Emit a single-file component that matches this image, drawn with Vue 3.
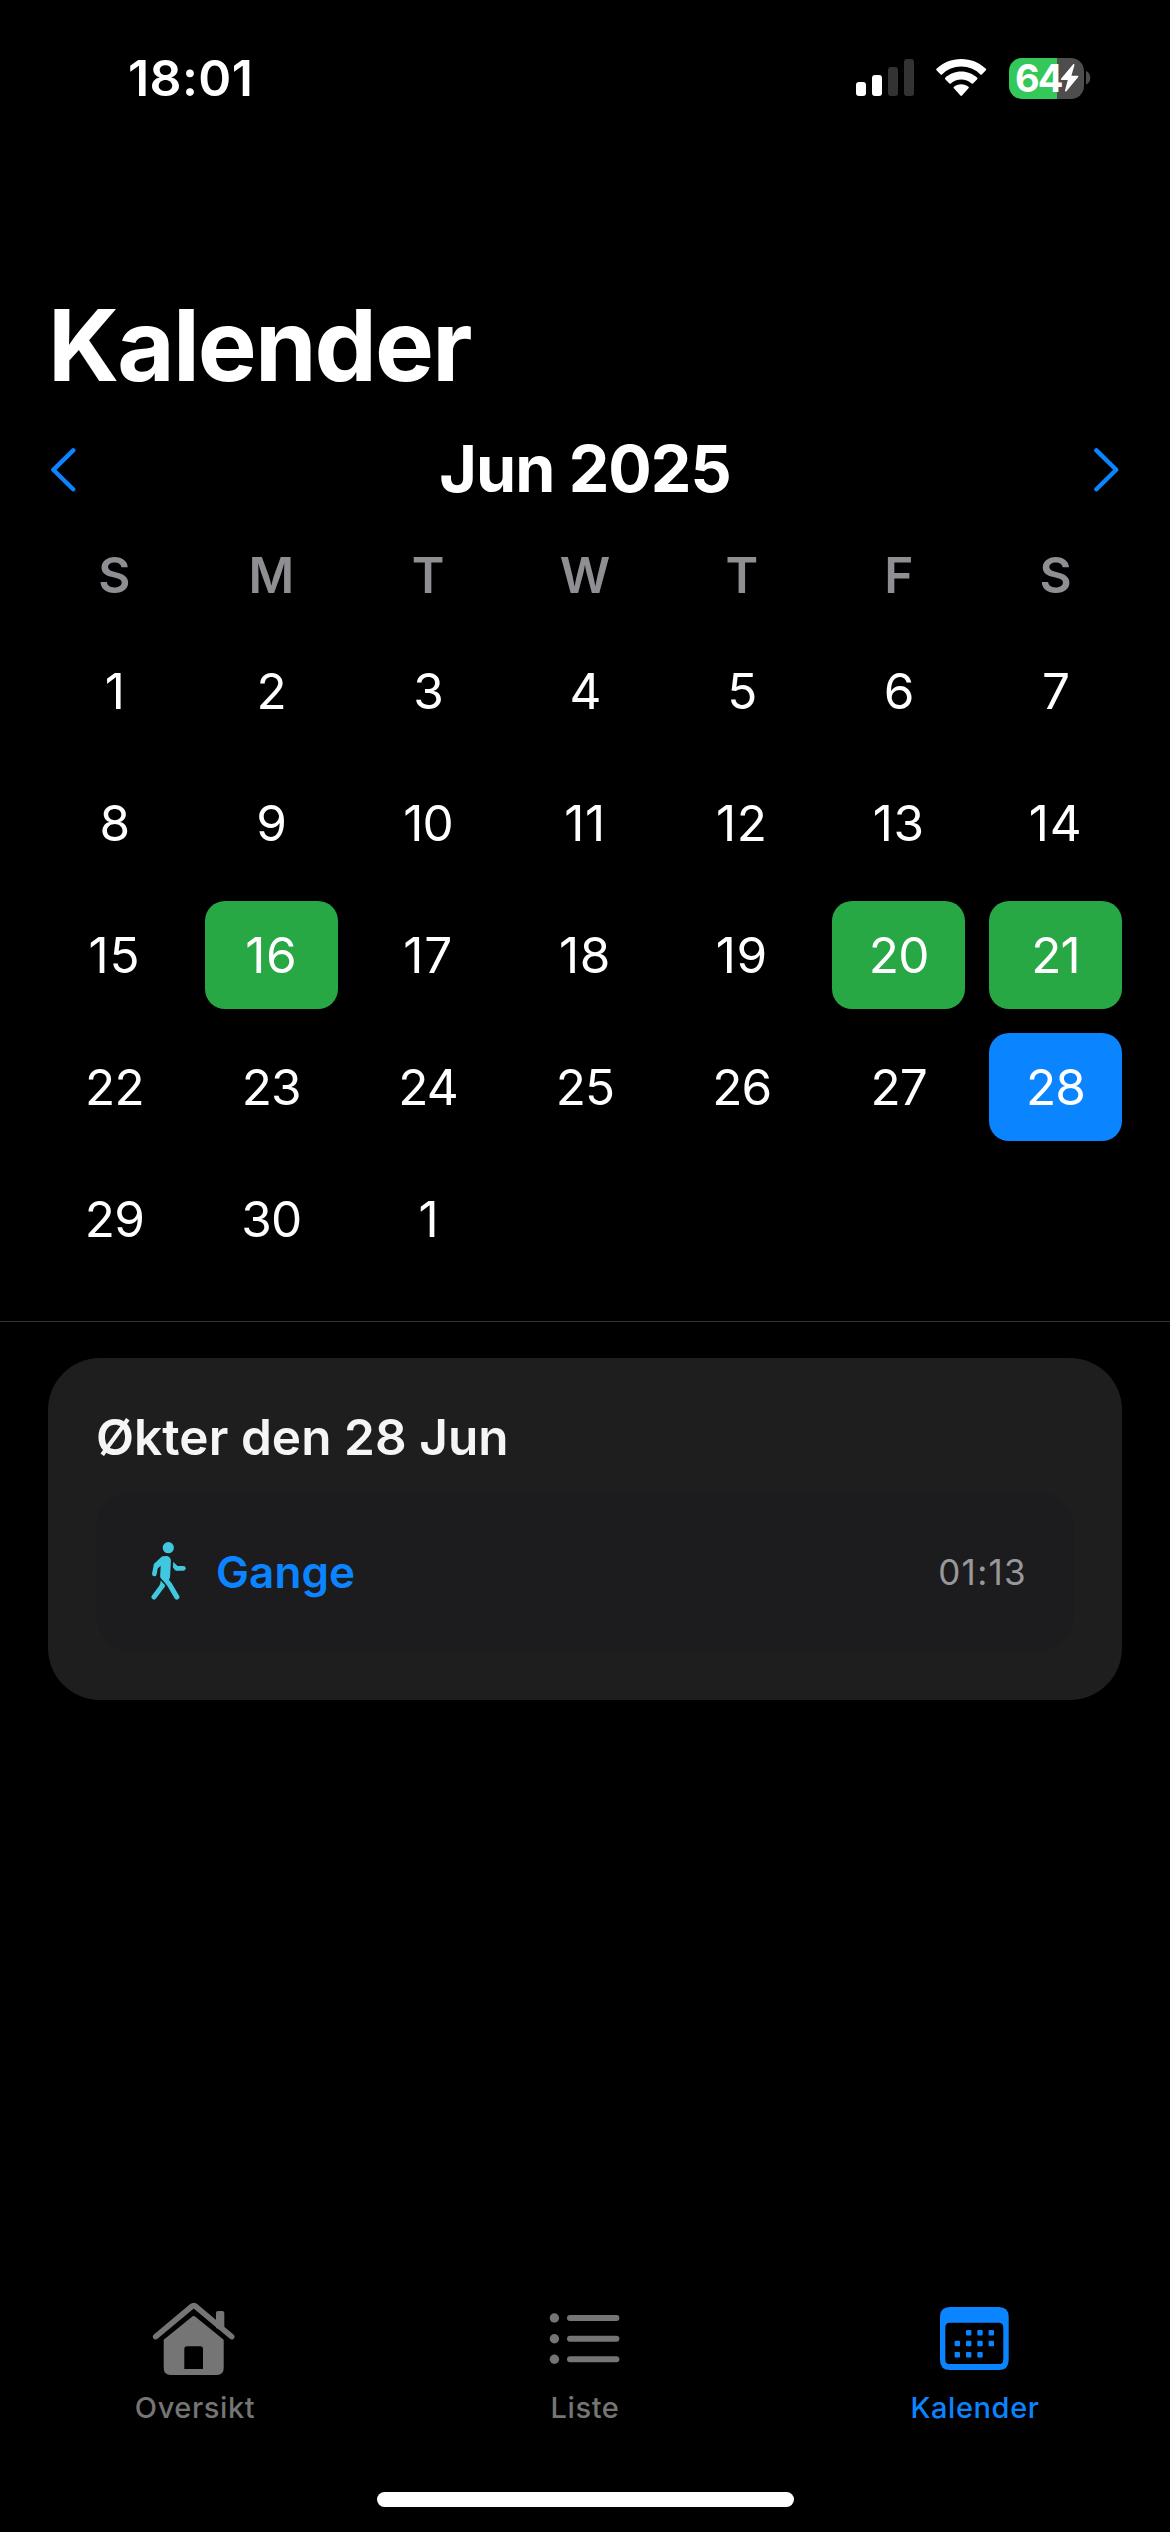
<script setup>
const weekdays = ['S', 'M', 'T', 'W', 'T', 'F', 'S']
const workoutDays = [16, 20, 21]
const selectedDay = 28

const days = Array.from({ length: 30 }, (_, i) => ({
  key: `jun-${i + 1}`,
  label: i + 1,
  teen: i + 1 >= 11 && i + 1 <= 19,
  workout: workoutDays.includes(i + 1),
  selected: i + 1 === selectedDay,
}))
days.push({ key: 'jul-1', label: 1, teen: false, workout: false, selected: false })

const calendarDots = [
  [43.7, 42.7], [55, 42.7], [66.3, 42.7],
  [32.3, 53.5], [43.7, 53.5], [55, 53.5], [66.3, 53.5],
  [32.3, 64.7], [43.7, 64.7], [55, 64.7],
]
</script>

<template>
  <div class="screen">
    <header class="status">
      <span class="clock">18:01</span>
      <div class="indicators">
        <svg class="signal" width="58" height="38" viewBox="0 0 58 38">
          <rect x="0" y="23" width="10" height="14" rx="3" fill="#fff" />
          <rect x="16" y="16" width="10" height="21" rx="3" fill="#fff" />
          <rect x="32" y="8" width="10" height="29" rx="3" fill="#333" />
          <rect x="48" y="0" width="10" height="37" rx="3" fill="#333" />
        </svg>
        <svg class="wifi" width="51" height="38" viewBox="0 0 51 38">
          <g fill="#fff">
            <path d="M25.2 0C15.500 0 6.800 3.700 .5 9.800a1 1 0 0 0 0 1.400L4.600 15.400a1 1 0 0 0 1.400 0A27.500 27.500 0 0 1 25.200 7.600 27.500 27.500 0 0 1 44.400 15.400a1 1 0 0 0 1.400 0L49.900 11.200a1 1 0 0 0 0-1.400C43.600 3.700 34.900 0 25.200 0z" />
            <path d="M25.200 12.600c-6.200 0-11.800 2.400-16 6.200a1 1 0 0 0 0 1.400l4.200 4.200a1 1 0 0 0 1.400 0 15.500 15.500 0 0 1 20.800 0 1 1 0 0 0 1.400 0l4.200-4.200a1 1 0 0 0 0-1.400c-4.200-3.800-9.800-6.200-16-6.200z" />
            <path d="M25.200 25.200c-2.800 0-5.300 1-7.300 2.600a1 1 0 0 0 0 1.500l6.500 7.200a1.100 1.100 0 0 0 1.600 0l6.500-7.200a1 1 0 0 0 0-1.500c-2-1.600-4.500-2.600-7.300-2.600z" />
          </g>
        </svg>
        <div class="battery">
          <span class="level">64</span>
          <svg class="bolt" width="19" height="28" viewBox="0 0 19 28">
            <path d="M13 .5 1 14.700c-.5.700-.2 1.300.6 1.300h6.200L5 26.500c-.3 1 .7 1.500 1.400.7L18.200 13c.5-.7.2-1.300-.6-1.300h-6.200L14.400 1.200C14.700.2 13.700-.3 13 .5z" fill="#fff" />
          </svg>
        </div>
        <svg class="nub" width="5" height="14" viewBox="0 0 5 14">
          <path d="M0 0c2.600.900 4.300 3.700 4.300 6.800S2.600 12.700 0 13.600z" fill="#4d4d4d" />
        </svg>
      </div>
    </header>

    <h1 class="title">Kalender</h1>

    <div class="month">
      <svg width="28" height="46" viewBox="0 0 28 46">
        <path d="M24.200 4.400 4.300 23.800 24.200 43.300" fill="none" stroke="#0a84ff" stroke-width="4.400" stroke-linecap="round" stroke-linejoin="round" />
      </svg>
      <h2 class="month-name">Jun 2025</h2>
      <svg width="28" height="46" viewBox="0 0 28 46">
        <path d="M3.400 4.400 23.200 23.800 3.400 43.300" fill="none" stroke="#0a84ff" stroke-width="4.400" stroke-linecap="round" stroke-linejoin="round" />
      </svg>
    </div>

    <div class="weekdays">
      <span v-for="(day, i) in weekdays" :key="i">{{ day }}</span>
    </div>

    <div class="grid">
      <div
        v-for="day in days"
        :key="day.key"
        class="day"
        :class="{ teen: day.teen, workout: day.workout, selected: day.selected }"
      >{{ day.label }}</div>
    </div>

    <div class="divider"></div>

    <section class="card">
      <h3 class="card-title">Økter den 28 Jun</h3>
      <div class="session">
        <svg class="walker" width="36" height="60" viewBox="0 0 36 60">
          <g fill="none" stroke="#40c8e0" stroke-linecap="round" stroke-linejoin="round">
            <path d="M12 16.800 5 23.300 3.300 32" stroke-width="4.600" />
            <path d="M12.500 35 18.500 42.500 25.800 55" stroke-width="5.200" />
            <path d="M11.200 44 3 55" stroke-width="5" />
            <path d="M25.500 26.300H32.300" stroke-width="4.800" />
          </g>
          <g fill="#40c8e0">
            <circle cx="17.300" cy="5.700" r="5.600" />
            <path d="M14.500 13.900c3.500 0 5.600 2 5.400 5.300l-.8 14.800c0 1.200-.3 2-.8 3L15 41.300l-4.700-4.500C9.400 35.800 9.100 34.700 9.200 33l.5-9.300-3.500 3.100-3-4.500 6.300-6.200c1.500-1.500 3.200-2.200 5-2.200z" />
            <path d="M9.700 38.500 13.900 43.300c-.2 1.200-.5 2-1.200 3L8.600 43.200c.6-1 .9-2.700 1.100-4.700z" />
            <path d="M22.200 19.800 26.500 23.900 25.500 28.700 22 25.800z" />
          </g>
        </svg>
        <span class="session-name">Gange</span>
        <span class="duration">01:13</span>
      </div>
    </section>

    <nav class="tabs">
      <div class="tab">
        <svg width="100" height="90" viewBox="0 0 100 90">
          <path d="M10.700 46.600 46.700 16.500q2-1.600 4 0L86.700 46.600" fill="none" stroke="#757575" stroke-width="5.600" stroke-linecap="round" stroke-linejoin="round" />
          <path d="M71 38V23q0-2 2-2h4.300q2 0 2 2v18z" fill="#757575" />
          <path fill-rule="evenodd" d="M47 26.700q1.700-1.400 3.400 0L78.700 49.800V78q0 7-7 7h-46q-7 0-7-7V49.800zM42 56.300q-2.700 0-2.700 2.700V79H58V59q0-2.700-2.700-2.700z" fill="#757575" />
        </svg>
        <span class="tab-label">Oversikt</span>
      </div>
      <div class="tab">
        <svg width="100" height="90" viewBox="0 0 100 90" fill="#757575">
          <template v-for="y in [28, 48.7, 69.3]" :key="y">
            <circle cx="19.400" :cy="y" r="4.700" />
            <rect x="32" :y="y - 3" width="52.400" height="6" rx="3" />
          </template>
        </svg>
        <span class="tab-label">Liste</span>
      </div>
      <div class="tab active">
        <svg width="100" height="90" viewBox="0 0 100 90" fill="#0a84ff">
          <path fill-rule="evenodd" d="M25 17h48.700q10 0 10 10v43q0 10-10 10H25q-10 0-10-10V27q0-10 10-10zM25 32.700q-4.700 0-4.700 4.700v32q0 4.700 4.700 4.700h48.600q4.700 0 4.700-4.700v-32q0-4.700-4.700-4.700z" />
          <rect v-for="([x, y], i) in calendarDots" :key="i" :x="x - 2.7" :y="y - 2.7" width="5.400" height="5.400" rx="1" />
        </svg>
        <span class="tab-label">Kalender</span>
      </div>
    </nav>
    <div class="home-indicator"></div>
  </div>
</template>

<style>
body {
  background: #000;
}
</style>

<style scoped>
.screen {
  display: flex;
  flex-direction: column;
  width: 1170px;
  height: 2532px;
  overflow: hidden;
  background: #000;
  color: #fff;
  font-family: Inter, "Liberation Sans", sans-serif;
}

h1,
h2,
h3 {
  margin: 0;
}

.status {
  display: flex;
  justify-content: space-between;
  align-items: center;
  height: 156px;
  padding: 0 79px 0 128px;
}

.clock {
  font-size: 50px;
  font-weight: 600;
  letter-spacing: 0.4px;
}

.indicators {
  display: flex;
  align-items: center;
}

.wifi {
  margin-left: 22px;
}

.battery {
  display: flex;
  align-items: center;
  box-sizing: border-box;
  width: 75px;
  height: 41px;
  margin-left: 22px;
  padding-left: 6px;
  border-radius: 13px;
  background: linear-gradient(90deg, #34c759 48px, #4d4d4d 48px);
}

.level {
  width: 45px;
  font-size: 38px;
  font-weight: 700;
  line-height: 41px;
  letter-spacing: -2px;
}

.nub {
  margin-left: 2px;
}

.title {
  height: 120px;
  margin-top: 129px;
  padding-left: 48px;
  font-size: 99px;
  font-weight: 700;
  line-height: 120px;
  letter-spacing: -1.900px;
}

.month {
  display: flex;
  justify-content: space-between;
  align-items: center;
  height: 127px;
  padding: 0 49px;
}

.month-name {
  font-size: 64.500px;
  font-weight: 700;
  line-height: 80px;
  letter-spacing: -1px;
}

.weekdays {
  display: grid;
  grid-template-columns: repeat(7, 1fr);
  column-gap: 24px;
  padding: 0 48px;
  color: #8e8e93;
  font-size: 49.500px;
  font-weight: 600;
  line-height: 86px;
  text-align: center;
}

.grid {
  display: grid;
  grid-template-columns: repeat(7, 1fr);
  grid-auto-rows: 108px;
  gap: 24px;
  margin-top: 19px;
  padding: 0 48px;
}

.day {
  border-radius: 20px;
  font-size: 49.500px;
  line-height: 108px;
  letter-spacing: -0.800px;
  text-align: center;
}

.teen {
  letter-spacing: 0.700px;
}

.workout {
  background: #28a745;
}

.selected {
  background: #0a84ff;
}

.divider {
  flex: none;
  height: 1px;
  margin-top: 48px;
  background: #333335;
}

.card {
  margin: 36px 48px 0;
  padding: 48px;
  border-radius: 52px;
  background: #1e1e1e;
}

.card-title {
  color: #f5f5f5;
  font-size: 49.500px;
  font-weight: 600;
  line-height: 62px;
  letter-spacing: 0.050px;
}

.session {
  display: flex;
  align-items: center;
  height: 161px;
  box-sizing: border-box;
  margin-top: 23px;
  padding: 0 47px 0 55px;
  border-radius: 38px;
  background: #1c1c1e;
}

.session-name {
  margin-left: 29px;
  color: #0a84ff;
  font-size: 44px;
  font-weight: 600;
  letter-spacing: 0.100px;
}

.duration {
  margin-left: auto;
  color: #98989b;
  font-size: 35px;
  letter-spacing: 1.300px;
}

.tabs {
  display: flex;
  margin-top: auto;
}

.tab {
  display: flex;
  flex: 1;
  flex-direction: column;
  align-items: center;
  color: #757575;
}

.tab.active {
  color: #0a84ff;
}

.tab-label {
  margin-top: 9.500px;
  font-size: 29px;
  font-weight: 500;
  line-height: 36px;
  letter-spacing: 0.600px;
}

.home-indicator {
  width: 417px;
  height: 15px;
  margin: 66.500px auto 25px;
  border-radius: 8px;
  background: #fff;
}
</style>
